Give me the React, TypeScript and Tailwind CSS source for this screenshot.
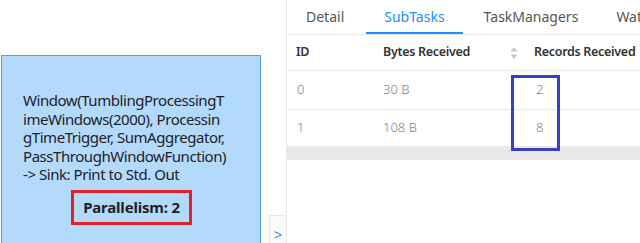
import React from "react";

const rows = [
  { id: "0", bytes: "30 B", records: "2" },
  { id: "1", bytes: "108 B", records: "8" },
];

export default function App() {
  return (
    <div
      className="relative flex h-[243px] w-[640px] overflow-hidden bg-white"
      style={{ fontFamily: "'Noto Sans', 'Open Sans', sans-serif" }}
    >
      {/* GRAPH */}
      <div className="relative w-[286px] shrink-0">
        <div className="absolute left-[1px] top-[55px] h-[200px] w-[260px] border border-[#5a9fe0] bg-[#b3d9fb]">
          <div className="pl-[21px] pt-[35px] text-[15px] leading-[18.6px] tracking-[-0.45px] text-[#1e2228]">
            Window(TumblingProcessingT
            <br />
            imeWindows(2000), Processin
            <br />
            gTimeTrigger, SumAggregator,
            <br />
            PassThroughWindowFunction)
            <br />
            -&gt; Sink: Print to Std. Out
          </div>
          <div className="ml-[69px] mt-[6px] flex h-[35px] w-[121px] items-center justify-center border-[3px] border-[#e3212b] text-[15px] font-bold tracking-[-0.2px] text-[#1e2228]">
            Parallelism: 2
          </div>
        </div>
        <div className="absolute left-[269px] top-[215px] flex h-[30px] w-[18px] items-end justify-center border border-[#e6e6e6] bg-[#fafafa] pb-[2px] text-[15px] leading-none text-[#3b8be0]">
          &gt;
        </div>
      </div>

      {/* DETAIL PANEL */}
      <div className="flex flex-1 flex-col border-l border-[#e8e8e8]">
        <div className="flex h-[35px] shrink-0 items-end whitespace-nowrap border-b border-[#e8e8e8] pl-[19px] text-[14px] text-[#555]">
          <div className="pb-[7px]">Detail</div>
          <div className="ml-[22px] border-b-2 border-[#1890ff] px-[18px] pb-[5px] text-[#1890ff]">SubTasks</div>
          <div className="ml-[21px] pb-[7px]">TaskManagers</div>
          <div className="ml-[38px] pb-[7px]">Watermarks</div>
        </div>

        <div className="flex h-[36px] shrink-0 items-center whitespace-nowrap border-b border-[#e8e8e8] text-[12.5px] font-semibold tracking-[-0.3px] text-[#333]">
          <div className="w-[87px] pl-[9px]">ID</div>
          <div className="flex w-[151px] items-center pl-[9px]">
            <span className="flex-1">Bytes Received</span>
            <SortIcon />
          </div>
          <div className="pl-[9px]">Records Received</div>
        </div>

        {rows.map((r, i) => (
          <div
            key={r.id}
            className={`flex shrink-0 items-center border-b border-[#e8e8e8] text-[13px] font-light text-[#808080] ${
              i === 0 ? "h-[39px]" : "h-[37px]"
            }`}
          >
            <div className="w-[87px] pl-[10px]">{r.id}</div>
            <div className="w-[151px] pl-[9px]">{r.bytes}</div>
            <div className="pl-[11px]">{r.records}</div>
          </div>
        ))}

        <div className="h-[13px] shrink-0 bg-[#e8e8e8]" />
      </div>

      {/* highlight around Records Received values */}
      <div className="absolute left-[511px] top-[75px] h-[76px] w-[49px] border-[3px] border-[#3a3fbf]" />
    </div>
  );
}

function SortIcon() {
  return (
    <svg width="8" height="14" viewBox="0 0 8 14" className="mr-[7px]">
      <path d="M4 1 L7.5 5.5 H0.5 Z" fill="#c8c8c8" />
      <path d="M4 13 L7.5 8.5 H0.5 Z" fill="#c8c8c8" />
    </svg>
  );
}
